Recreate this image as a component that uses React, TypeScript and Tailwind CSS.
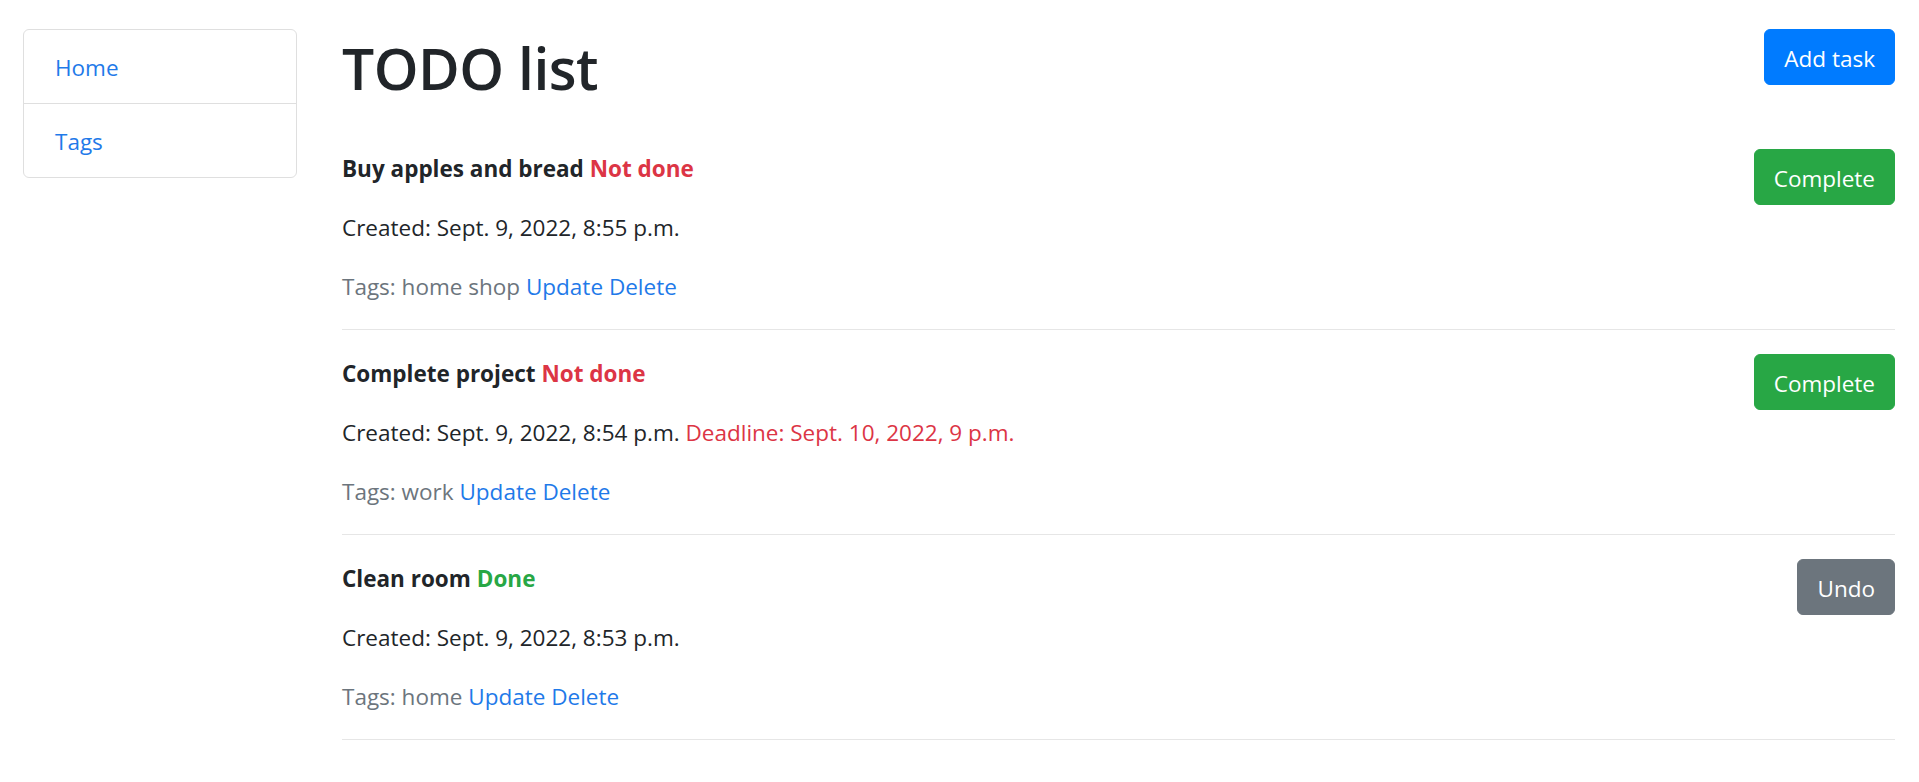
const tasks = [
  {
    name: "Buy apples and bread",
    done: false,
    created: "Sept. 9, 2022, 8:55 p.m.",
    deadline: "",
    tags: "home shop",
  },
  {
    name: "Complete project",
    done: false,
    created: "Sept. 9, 2022, 8:54 p.m.",
    deadline: "Sept. 10, 2022, 9 p.m.",
    tags: "work",
  },
  {
    name: "Clean room",
    done: true,
    created: "Sept. 9, 2022, 8:53 p.m.",
    deadline: "",
    tags: "home",
  },
];

const btn = "text-white rounded-[6px] px-[19px] pt-[11px] pb-[7px] leading-[36px] border";

const App = () => {
  return (
    <div className="min-h-[782px] bg-white font-['Open_Sans','Noto_Sans',sans-serif] text-[22.5px] leading-[36px] text-[#212529]">
      <div className="flex pt-[29px]">
        <aside className="w-[320px] shrink-0 px-[23px]">
          <ul className="border border-[#dfdfdf] rounded-[6px] flex flex-col">
            <li className="px-[31px] pt-[20px] pb-[17px] border-b border-[#dfdfdf]">
              <a className="text-[#1f7ae9]" href="#">Home</a>
            </li>
            <li className="px-[31px] pt-[20px] pb-[17px]">
              <a className="text-[#1f7ae9]" href="#">Tags</a>
            </li>
          </ul>
        </aside>

        <main className="flex-1 pl-[22px] pr-[24px]">
          <div className="flex justify-between items-start mb-[45px]">
            <h1 className="text-[57px] leading-[72px] pt-[3px] font-semibold tracking-[-0.5px]">TODO list</h1>
            <button className={`${btn} bg-[#007bff] border-[#007bff]`}>Add task</button>
          </div>

          {tasks.map((task) => (
            <div key={task.name}>
              <div className="flex justify-between items-start">
                <div className="flex flex-col gap-[21px]">
                  <p className="pt-[2px]">
                    <span className="font-bold">{task.name}</span>{" "}
                    {task.done ? (
                      <span className="font-bold text-[#28a745]">Done</span>
                    ) : (
                      <span className="font-bold text-[#dc3545]">Not done</span>
                    )}
                  </p>
                  <p className="pt-[2px]">
                    Created: {task.created}
                    {task.deadline && (
                      <span className="text-[#dc3545]"> Deadline: {task.deadline}</span>
                    )}
                  </p>
                  <p className="pt-[2px] text-[#6c757d]">
                    Tags: {task.tags}{" "}
                    <a className="text-[#1f7ae9]" href="#">Update</a>{" "}
                    <a className="text-[#1f7ae9]" href="#">Delete</a>
                  </p>
                </div>
                {task.done ? (
                  <button className={`${btn} bg-[#6c757d] border-[#6c757d]`}>Undo</button>
                ) : (
                  <button className={`${btn} bg-[#28a745] border-[#28a745]`}>Complete</button>
                )}
              </div>
              <hr className="my-[24px] border-t border-[#e6e6e6]" />
            </div>
          ))}
        </main>
      </div>
    </div>
  );
};

export default App;
